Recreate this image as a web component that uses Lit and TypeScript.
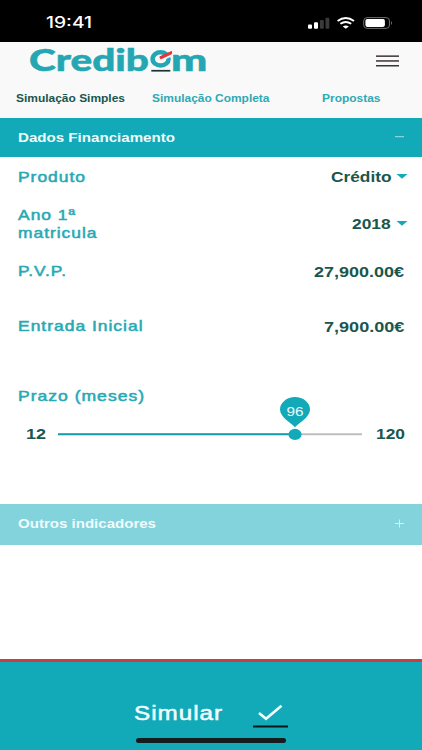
import { LitElement, html, css, svg } from "lit";
import { customElement } from "lit/decorators.js";

/* Wide-set text: a run of real text fitted to a given advance width. */
const wide = (text: string, width: number, size: number, cls = "", base = 14.2, spacing = 0) => html`
  <svg class="wide ${cls}" width=${width} height="18">
    <text x="0" y=${base} font-size=${size} letter-spacing=${spacing}
      textLength=${width} lengthAdjust="spacingAndGlyphs">${text}</text>
  </svg>`;

const caret = html`<svg class="caret" width="12" height="5"><path d="M0.5 0H11.5L6 4.8Z" fill="#12a9b8"/></svg>`;

@customElement("app-root")
export class AppRoot extends LitElement {
  static styles = css`
    :host { display: flex; flex-direction: column; width: 422px; height: 750px; overflow: hidden;
      background: #fff; font-family: "Liberation Sans", Arial, sans-serif; color: #1a564d; }
    svg { display: block; overflow: visible; flex: none; }
    text { fill: currentColor; }
    .bold { font-weight: 700; }
    .label { color: #27a9b4; stroke: #27a9b4; stroke-width: 0.5px; }
    .status { height: 42px; background: #000; color: #fff; display: flex; align-items: center;
      justify-content: space-between; padding: 4px 29px 0 46px; box-sizing: border-box; }
    .clock { font-family: Inter, sans-serif; font-weight: 500; }
    .top { height: 76px; background: #f9f9f9; box-sizing: border-box; }
    .brand { height: 40px; display: flex; justify-content: space-between; padding: 0 23px 0 29px; }
    .burger { margin-top: 13px; }
    .logo { font-family: Lato, sans-serif; font-weight: 900; color: #24a7b3; }
    .logo text { stroke: #24a7b3; stroke-width: 0.5px; }
    .tabs { display: flex; padding: 7px 0 0 16px; color: #2fa9b5; }
    .active { color: #1a564d; }
    .tab2 { margin-left: 27px; }
    .tab3 { margin-left: 52.5px; }
    .bar { display: flex; align-items: center; justify-content: space-between; box-sizing: border-box;
      padding: 0 18px; color: #effcfc; background: #12a9b8; height: 39px; }
    .bar.soft { background: #83d3dc; height: 41px; margin-top: 48px; padding-bottom: 2px; }
    .row { display: flex; align-items: center; justify-content: space-between; padding: 0 18px 0 18px; height: 39px; }
    .row.year { height: 55px; }
    .row.price { height: 40px; }
    .row.entry { height: 70px; }
    .pick { display: flex; align-items: center; gap: 5px; margin-right: -4px; }
    .term { padding: 26px 18px 0; height: 52px; box-sizing: border-box; }
    .slider { display: flex; align-items: center; height: 43px; padding: 0 18px 0 26px; }
    .track { margin: 0 13.5px 0 12px; }
    .pin { fill: #eaffff; }
    footer { margin-top: auto; height: 91px; box-sizing: border-box; border-top: 3px solid #c53f45;
      background: #12a9b8; color: #f2ffff; display: flex; flex-direction: column; align-items: center; }
    .cta { display: flex; gap: 30px; padding: 41px 1px 0 0; height: 76px; box-sizing: border-box; }
    .cta .send { stroke: currentColor; stroke-width: 0.5px; }
    .home { width: 150px; height: 4.5px; border-radius: 3px; background: #151c1e; }
  `;

  render() {
    return html`
      <div class="status">
        ${wide("19:41", 46, 15.3, "clock", 14.2)}
        <svg width="86" height="14" viewBox="0 0 86 14">
          <g fill="#fff">
            <rect x="1" y="8.5" width="4" height="4.2" rx="1"/>
            <rect x="7" y="6.3" width="4" height="6.4" rx="1"/>
            <g fill="#3b3b3d"><rect x="13" y="4" width="3.8" height="8.7" rx="1"/>
              <rect x="18.5" y="1.8" width="3.8" height="10.9" rx="1"/></g>
            <path d="M38.8 12.7L35.7 10.4Q38.8 8.4 41.9 10.4Z"/>
          </g>
          <g fill="none" stroke="#fff" stroke-width="2">
            <path d="M30.6 5Q38.8 -0.8 47 5"/><path d="M33.4 7.8Q38.8 4 44.2 7.8"/>
          </g>
          <rect x="56.7" y="1.6" width="25.8" height="10.8" rx="3.4" fill="none" stroke="#6f6f6f"/>
          <rect x="58.4" y="3.1" width="19.5" height="7.8" rx="1.8" fill="#fff"/>
          <path d="M84 5Q86 7 84 9Z" fill="#6f6f6f"/>
        </svg>
      </div>

      <div class="top">
        <div class="brand">
          <svg class="logo" width="178" height="36">
            <text x="0" y="29.3" font-size="30.3" textLength="120" lengthAdjust="spacingAndGlyphs">Credib</text>
            <text x="142" y="29.3" font-size="31" textLength="36.3" lengthAdjust="spacingAndGlyphs">m</text>
            <ellipse cx="131.6" cy="16.9" rx="8" ry="6.7" fill="none" stroke="#24a7b3" stroke-width="4.5"/>
            <path d="M131 16.2L143.6 10.4V14L132.4 19Z" fill="#f9f9f9"/>
            <path d="M130.8 14.8L142.6 9.4V11.8L131.8 16.9Z" fill="#e2353d" stroke="#e2353d"/>
            <rect x="122.3" y="27.9" width="19" height="1.7" fill="#17373a"/>
          </svg>
          <svg class="burger" width="23" height="13">
            <g fill="#3d3439"><rect y="0.4" width="23" height="1.5"/><rect y="5.2" width="23" height="1.5"/><rect y="10" width="23" height="1.5"/></g>
          </svg>
        </div>
        <div class="tabs">
          ${wide("Simulação Simples", 109, 10.5, "bold active", 13.4)}
          ${wide("Simulação Completa", 117.5, 10.5, "bold tab2", 13.4)}
          ${wide("Propostas", 58.5, 10.5, "bold tab3", 13.4)}
        </div>
      </div>

      <div class="bar">
        ${wide("Dados Financiamento", 157, 12.2, "bold", 13)}
        <svg width="9" height="9"><rect y="3.2" width="9" height="1" fill="#a6dfe3"/></svg>
      </div>
      <div class="row">
        ${wide("Produto", 68, 14.2, "label", 14, 0.8)}
        <div class="pick">${wide("Crédito", 60.5, 14.5, "bold", 14.2)}${caret}</div>
      </div>
      <div class="row year">
        <div>
          ${wide("Ano 1ª", 58, 14.2, "label", 14, 0.8)}
          ${wide("matricula", 79.5, 14.2, "label", 14, 0.8)}
        </div>
        <div class="pick">${wide("2018", 38.7, 14.5, "bold", 14.2)}${caret}</div>
      </div>
      <div class="row price">
        ${wide("P.V.P.", 49, 14.2, "label", 14, 0.8)}
        ${wide("27,900.00€", 90, 14.5, "bold", 14.7)}
      </div>
      <div class="row entry">
        ${wide("Entrada Inicial", 125.5, 14.2, "label", 14, 0.8)}
        ${wide("7,900.00€", 80.3, 14.5, "bold", 14.7)}
      </div>
      <div class="term">${wide("Prazo (meses)", 127, 14.2, "label", 14, 0.8)}</div>
      <div class="slider">
        ${wide("12", 20, 14.5, "bold", 12.8)}
        <svg class="track" width="304" height="12">
          <rect x="0" y="4.3" width="304" height="1.9" fill="#b9bcbc"/>
          <rect x="0" y="4.3" width="237" height="1.9" fill="#12a0ad"/>
          <ellipse cx="237" cy="5.4" rx="6.5" ry="5.6" fill="#12a9b8"/>
          <path d="M237 -1.8C234 -5.6 222 -11.6 222 -19.6A15 12.4 0 0 1 252 -19.6C252 -11.6 240 -5.6 237 -1.8Z" fill="#12a9b8"/>
          ${svg`<text class="pin" x="228.5" y="-13.4" font-size="12" textLength="17" lengthAdjust="spacingAndGlyphs">96</text>`}
        </svg>
        ${wide("120", 29, 14.5, "bold", 12.8)}
      </div>
      <div class="bar soft">
        ${wide("Outros indicadores", 138, 12.2, "bold", 13.3)}
        <svg width="9" height="9"><path d="M0 4.5H9M4.5 0.5V8.5" stroke="#d3f1f3"/></svg>
      </div>

      <footer>
        <div class="cta">
          ${wide("Simular", 89, 20, "send", 16.9, 0.8)}
          <svg width="35" height="26">
            <path d="M6 10L13 15.8L28.5 2.8" fill="none" stroke="#f2ffff" stroke-width="2.6"/>
            <rect y="22.5" width="35" height="2" fill="#0d1618"/>
          </svg>
        </div>
        <div class="home"></div>
      </footer>
    `;
  }
}
